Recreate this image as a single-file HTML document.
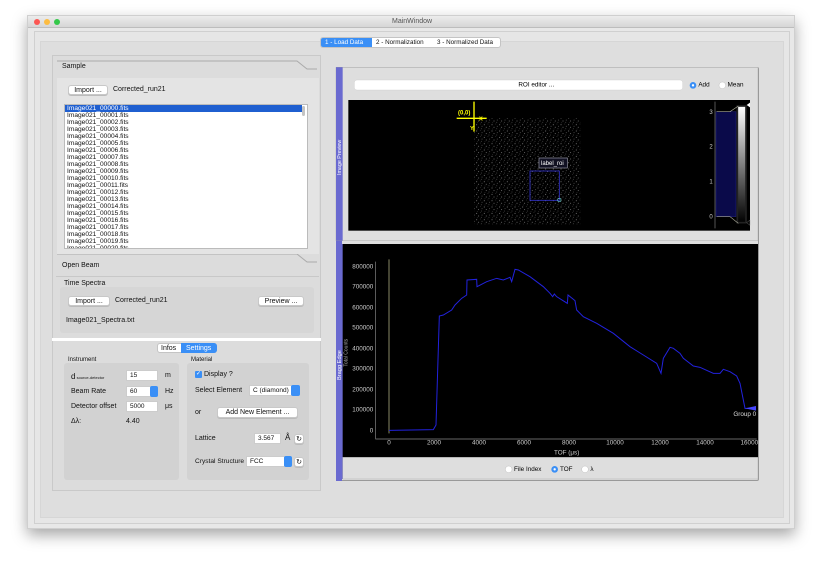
<!DOCTYPE html>
<html><head><meta charset="utf-8"><style>
*{box-sizing:border-box;margin:0;padding:0}
body{width:823px;height:568px;background:#fff;font-family:"Liberation Sans",sans-serif;font-size:7px;color:#111;position:relative;overflow:hidden}
.a{position:absolute}
.btn{position:absolute;background:#fff;border:1px solid #c8c8c8;border-radius:3px;text-align:center;font-size:7px;line-height:9px;box-shadow:0 1px 0 #bbb;white-space:nowrap}
.inp{position:absolute;background:#fff;border:1px solid #ccc;font-size:6.5px;line-height:10px;padding-left:3px;white-space:nowrap;overflow:hidden}
.t{position:absolute;font-size:7px;white-space:nowrap}
.list div{height:7px;line-height:7px;font-size:6.6px;padding-left:2px}
</style></head><body>
<div class="a" style="left:27px;top:15px;width:768px;height:514px;background:#e8e8e8;border:1px solid #cfcfcf;box-shadow:0 6px 14px rgba(0,0,0,.35)"></div>
<div class="a" style="left:28px;top:16px;width:766px;height:12px;background:linear-gradient(#ececec,#d6d6d6);border-bottom:1px solid #bdbdbd"></div>
<div class="a" style="left:34px;top:19px;width:6px;height:6px;border-radius:50%;background:#fc5753"></div>
<div class="a" style="left:44px;top:19px;width:6px;height:6px;border-radius:50%;background:#fdbc40"></div>
<div class="a" style="left:54px;top:19px;width:6px;height:6px;border-radius:50%;background:#34c84a"></div>
<div class="t" style="left:392px;top:18px;color:#555;font-size:7px">MainWindow</div>
<div class="a" style="left:34px;top:31px;width:756px;height:493px;border:1px solid #d0d0d0;background:#e6e6e6"></div>
<div class="a" style="left:40px;top:41px;width:744px;height:477px;border:1px solid #d6d6d6;background:#dedede"></div>
<div class="a" style="left:320px;top:37px;width:181px;height:11px;background:#fff;border:1px solid #c4c4c4;border-radius:3px"></div>
<div class="a" style="left:321px;top:38px;width:51px;height:9px;background:#3a8ff6;border-radius:2px 0 0 2px"></div>
<div class="t" style="left:325px;top:39px;color:#fff;font-size:6.3px">1 - Load Data</div>
<div class="t" style="left:376px;top:39px;font-size:6.3px">2 - Normalization</div>
<div class="t" style="left:437px;top:39px;font-size:6.3px">3 - Normalized Data</div>
<div class="a" style="left:52px;top:55px;width:269px;height:436px;border:1px solid #c9c9c9;background:#dcdcdc"></div>
<svg class="a" style="left:52px;top:55px" width="270" height="230"><path d="M5 6H245L255 14H265" fill="none" stroke="#aaa"/><path d="M5 199H245L255 207H265" fill="none" stroke="#aaa"/></svg>
<div class="t" style="left:62px;top:63px">Sample</div>
<div class="a" style="left:57px;top:78px;width:262px;height:176px;background:#e4e4e4"></div>
<div class="btn" style="left:68px;top:85px;width:40px;height:10px">Import ...</div>
<div class="t" style="left:113px;top:86px">Corrected_run21</div>
<div class="a list" style="left:64px;top:104px;width:244px;height:145px;background:#fff;border:1px solid #bbb;overflow:hidden">
<div style="background:#1f5fd0;color:#fff;width:237px">Image021_00000.fits</div>
<div>Image021_00001.fits</div><div>Image021_00002.fits</div><div>Image021_00003.fits</div><div>Image021_00004.fits</div><div>Image021_00005.fits</div><div>Image021_00006.fits</div><div>Image021_00007.fits</div><div>Image021_00008.fits</div><div>Image021_00009.fits</div><div>Image021_00010.fits</div><div>Image021_00011.fits</div><div>Image021_00012.fits</div><div>Image021_00013.fits</div><div>Image021_00014.fits</div><div>Image021_00015.fits</div><div>Image021_00016.fits</div><div>Image021_00017.fits</div><div>Image021_00018.fits</div><div>Image021_00019.fits</div><div>Image021_00020.fits</div>
</div>
<div class="a" style="left:302px;top:106px;width:3px;height:10px;background:#c4c4c4;border-radius:2px"></div>
<div class="t" style="left:62px;top:262px">Open Beam</div>
<div class="a" style="left:56px;top:276px;width:263px;height:1px;background:#c8c8c8"></div>
<div class="t" style="left:64px;top:280px">Time Spectra</div>
<div class="a" style="left:60px;top:287px;width:254px;height:46px;background:#d6d6d6;border-radius:3px"></div>
<div class="btn" style="left:68px;top:296px;width:42px;height:10px">Import ...</div>
<div class="t" style="left:115px;top:297px">Corrected_run21</div>
<div class="btn" style="left:258px;top:296px;width:46px;height:10px">Preview ...</div>
<div class="t" style="left:66px;top:317px">Image021_Spectra.txt</div>
<div class="a" style="left:52px;top:338px;width:269px;height:3px;background:#fff"></div>
<div class="a" style="left:157px;top:343px;width:60px;height:10px;background:#fff;border:1px solid #c4c4c4;border-radius:3px"></div>
<div class="a" style="left:181px;top:343px;width:36px;height:10px;background:#3a8ff6;border-radius:0 3px 3px 0"></div>
<div class="t" style="left:161px;top:345px">Infos</div>
<div class="t" style="left:186px;top:345px;color:#fff">Settings</div>
<div class="t" style="left:68px;top:357px;font-size:6px">Instrument</div>
<div class="a" style="left:64px;top:363px;width:115px;height:117px;background:#d2d2d2;border-radius:3px"></div>
<div class="t" style="left:71px;top:372px;font-size:8px">d<span style="font-size:4px"> source-detector</span></div>
<div class="inp" style="left:126px;top:370px;width:32px;height:11px">15</div><div class="t" style="left:165px;top:372px">m</div>
<div class="t" style="left:71px;top:388px">Beam Rate</div>
<div class="inp" style="left:126px;top:386px;width:32px;height:11px">60</div>
<div class="a" style="left:150px;top:386px;width:8px;height:11px;background:#3a8ff6;border-radius:2px"></div><div class="t" style="left:165px;top:388px">Hz</div>
<div class="t" style="left:71px;top:403px">Detector offset</div>
<div class="inp" style="left:126px;top:401px;width:32px;height:11px">5000</div><div class="t" style="left:165px;top:403px">μs</div>
<div class="t" style="left:71px;top:418px">Δλ:</div><div class="t" style="left:126px;top:418px">4.40</div>
<div class="t" style="left:191px;top:357px;font-size:6px">Material</div>
<div class="a" style="left:187px;top:363px;width:122px;height:117px;background:#d2d2d2;border-radius:3px"></div>
<div class="a" style="left:195px;top:371px;width:7px;height:7px;background:#3a8ff6;border-radius:1px;color:#fff;font-size:6px;line-height:7px;text-align:center">✓</div>
<div class="t" style="left:204px;top:371px">Display ?</div>
<div class="t" style="left:195px;top:387px">Select Element</div>
<div class="inp" style="left:249px;top:385px;width:43px;height:11px">C (diamond)</div>
<div class="a" style="left:291px;top:385px;width:9px;height:11px;background:#3a8ff6;border-radius:2px"></div>
<div class="t" style="left:195px;top:409px">or</div>
<div class="btn" style="left:217px;top:407px;width:81px;height:11px;line-height:10px">Add New Element ...</div>
<div class="t" style="left:195px;top:435px">Lattice</div>
<div class="inp" style="left:254px;top:433px;width:27px;height:11px">3.567</div><div class="t" style="left:285px;top:433px;font-size:8px">Å</div>
<div class="btn" style="left:294px;top:434px;width:10px;height:10px">↻</div>
<div class="t" style="left:195px;top:458px;font-size:6.6px">Crystal Structure</div>
<div class="inp" style="left:246px;top:456px;width:39px;height:11px">FCC</div>
<div class="a" style="left:284px;top:456px;width:8px;height:11px;background:#3a8ff6;border-radius:2px"></div>
<div class="btn" style="left:294px;top:457px;width:10px;height:10px">↻</div>
<div class="a" style="left:336px;top:67px;width:423px;height:414px;background:#dedede;border:1px solid #999;border-radius:2px"></div>
<div class="a" style="left:336px;top:67px;width:6px;height:414px;background:#6a6ad0"></div>
<svg class="a" style="left:330px;top:60px" width="430" height="190" viewBox="0 0 1290 570">
<defs><pattern id="n" width="23" height="19" patternUnits="userSpaceOnUse"><rect width="23" height="19" fill="#000"/><circle cx="3" cy="4" r="1.3" fill="#aaa"/><circle cx="14" cy="2" r="1" fill="#777"/><circle cx="9" cy="12" r="1.3" fill="#999"/><circle cx="19" cy="9" r="1" fill="#ccc"/><circle cx="17" cy="16" r="1.2" fill="#888"/><circle cx="5" cy="17" r="1" fill="#666"/></pattern></defs>
<rect x="18" y="22" width="1266" height="520" fill="#dedede" stroke="#999"/>
<rect x="18" y="22" width="20" height="520" fill="#6a6ad0"/>
<text x="33" y="345" transform="rotate(-90 33 345)" fill="#fff" font-size="16">Image Preview</text>
<rect x="73" y="60" width="985" height="30" rx="8" fill="#fff" stroke="#c4c4c4"/>
<text x="565" y="80" font-size="19">ROI editor ...</text>
<circle cx="1089" cy="76" r="10" fill="#3a8ff6"/><circle cx="1089" cy="76" r="3.5" fill="#fff"/><text x="1105" y="80" font-size="19">Add</text>
<circle cx="1177" cy="76" r="10" fill="#fff" stroke="#aaa"/><text x="1193" y="80" font-size="19">Mean</text>
<rect x="55" y="120" width="1205" height="392" fill="#000"/>
<rect x="432" y="175" width="320" height="320" fill="url(#n)"/>
<path d="M380 175H470M432 125V215" stroke="#ff0" stroke-width="4"/>
<text x="384" y="163" fill="#ff0" font-size="18" font-weight="bold">(0,0)</text>
<text x="447" y="182" fill="#ff0" font-size="17" font-weight="bold">X</text><text x="420" y="210" fill="#ff0" font-size="17" font-weight="bold">Y</text>
<rect x="627" y="294" width="85" height="30" fill="#112" stroke="#99a" stroke-width="2"/>
<text x="633" y="315" fill="#fff" font-size="18">label_roi</text>
<rect x="600" y="333" width="88" height="88" fill="none" stroke="#33c" stroke-width="2.5"/>
<circle cx="688" cy="420" r="5" fill="none" stroke="#6cc" stroke-width="2"/>
<path d="M1155 125V505" stroke="#555" stroke-width="3"/>
<g fill="#ccc" font-size="18"><text x="1138" y="162">3</text><text x="1138" y="266">2</text><text x="1138" y="370">1</text><text x="1138" y="476">0</text></g>
<rect x="1158" y="155" width="60" height="315" fill="#0a0a4a" stroke="#33a"/>
<defs><linearGradient id="g" x1="0" y1="0" x2="0" y2="1"><stop offset="0" stop-color="#fff"/><stop offset="1" stop-color="#000"/></linearGradient></defs>
<rect x="1222" y="138" width="26" height="350" fill="url(#g)" stroke="#222" stroke-width="5"/>
<path d="M1160 155L1200 155L1225 138M1160 470L1200 470L1225 490" stroke="#aa9" fill="none" stroke-width="2"/>
<path d="M1260 128L1250 135L1260 142Z" fill="#fff"/><path d="M1260 480L1250 488L1260 496Z" fill="none" stroke="#999"/>
</svg>
<svg class="a" style="left:330px;top:240px" width="430" height="250" viewBox="0 0 1290 750">
<rect x="18" y="12" width="1266" height="640" fill="#000"/>
<rect x="18" y="12" width="20" height="705" fill="#6a6ad0"/>
<rect x="38" y="652" width="1246" height="65" fill="#dedede" stroke="#999"/>
<text x="33" y="420" transform="rotate(-90 33 420)" fill="#fff" font-size="17">Bragg Edge</text>
<text x="52" y="380" transform="rotate(-90 52 380)" fill="#aaa" font-size="15">Total Counts</text>
<path d="M137 65V597H1280" stroke="#888" stroke-width="2" fill="none"/>
<path d="M177 58V580" stroke="#886" stroke-width="3"/>
<g fill="#ccc" font-size="19" text-anchor="end">
<text x="130" y="85">800000</text><text x="130" y="146">700000</text><text x="130" y="208">600000</text><text x="130" y="269">500000</text><text x="130" y="331">400000</text><text x="130" y="392">300000</text><text x="130" y="454">200000</text><text x="130" y="515">100000</text><text x="130" y="577">0</text></g>
<g fill="#ccc" font-size="19" text-anchor="middle">
<text x="177" y="613">0</text><text x="312" y="613">2000</text><text x="447" y="613">4000</text><text x="582" y="613">6000</text><text x="717" y="613">8000</text><text x="855" y="613">10000</text><text x="990" y="613">12000</text><text x="1125" y="613">14000</text><text x="1258" y="613">16000</text></g>
<text x="710" y="644" fill="#ccc" font-size="19" text-anchor="middle">TOF (μs)</text>
<polyline fill="none" stroke="#2222dd" stroke-width="3" points="177,571 310,569 318,555 328,228 340,225 365,210 375,195 395,175 410,165 411,120 440,118 441,140 470,125 500,115 520,120 540,112 545,125 555,88 565,90 600,110 640,140 660,160 668,170 673,162 680,170 712,190 714,165 735,182 740,210 760,230 800,250 850,280 900,320 940,345 980,370 993,400 1000,355 1020,322 1030,325 1050,340 1060,355 1090,378 1110,382 1150,400 1170,400 1180,388 1200,395 1220,408 1230,430 1245,505 1262,505"/>
<path d="M1245 505L1278 498L1278 512Z" fill="#44f"/>
<text x="1210" y="528" fill="#ddd" font-size="19">Group 0</text>
<circle cx="536" cy="688" r="10" fill="#fff" stroke="#aaa"/><text x="552" y="693" font-size="19">File Index</text>
<circle cx="674" cy="688" r="10" fill="#3a8ff6"/><circle cx="674" cy="688" r="3.5" fill="#fff"/><text x="690" y="693" font-size="19">TOF</text>
<circle cx="765" cy="688" r="10" fill="#fff" stroke="#aaa"/><text x="781" y="693" font-size="19">λ</text>
</svg>
</body></html>
